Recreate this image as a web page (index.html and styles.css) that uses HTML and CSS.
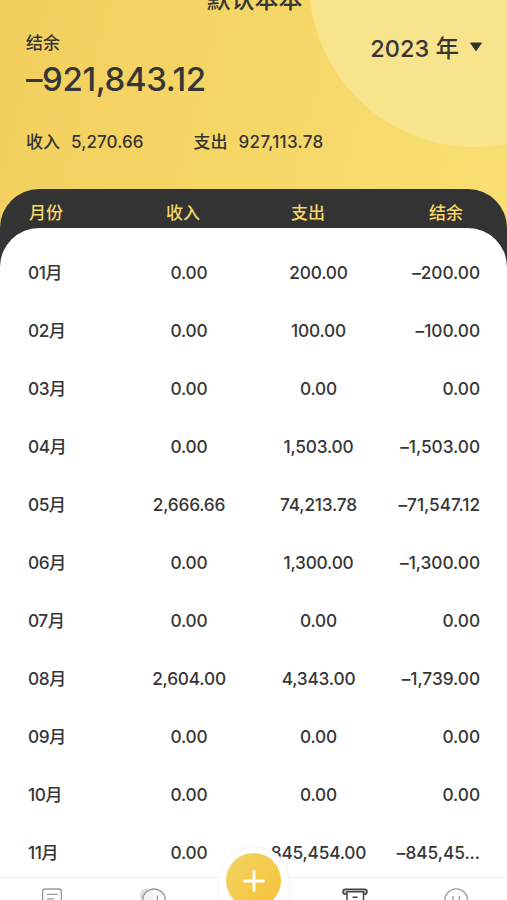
FILE: index.html
```html
<!DOCTYPE html>
<html lang="zh-CN">
<head>
    <meta charset="UTF-8">
    <meta name="viewport" content="width=device-width, initial-scale=1.0">
    <title>默认本本</title>
    <link rel="stylesheet" href="styles.css">
</head>
<body>
    <header class="summary">
        <h1 class="book-name">默认本本</h1>
        <div class="summary-top">
            <div class="balance">
                <div class="label">结余</div>
                <div class="balance-value">–921,843.12</div>
            </div>
            <div class="year">
                <span>2023 年</span>
                <svg width="14" height="10" viewBox="0 0 14 10"><path d="M1.6 1h10.8L7 8.8z" fill="#333" stroke="#333" stroke-linejoin="round"/></svg>
            </div>
        </div>
        <div class="totals">
            <div class="total"><span>收入</span><span class="num">5,270.66</span></div>
            <div class="total"><span>支出</span><span class="num">927,113.78</span></div>
        </div>
    </header>

    <main class="report">
        <div class="report-head">
            <span>月份</span>
            <span>收入</span>
            <span>支出</span>
            <span>结余</span>
        </div>
        <div class="months">
            <div class="row"><span>01月</span><span>0.00</span><span>200.00</span><span>–200.00</span></div>
            <div class="row"><span>02月</span><span>0.00</span><span>100.00</span><span>–100.00</span></div>
            <div class="row"><span>03月</span><span>0.00</span><span>0.00</span><span>0.00</span></div>
            <div class="row"><span>04月</span><span>0.00</span><span>1,503.00</span><span>–1,503.00</span></div>
            <div class="row"><span>05月</span><span>2,666.66</span><span>74,213.78</span><span>–71,547.12</span></div>
            <div class="row"><span>06月</span><span>0.00</span><span>1,300.00</span><span>–1,300.00</span></div>
            <div class="row"><span>07月</span><span>0.00</span><span>0.00</span><span>0.00</span></div>
            <div class="row"><span>08月</span><span>2,604.00</span><span>4,343.00</span><span>–1,739.00</span></div>
            <div class="row"><span>09月</span><span>0.00</span><span>0.00</span><span>0.00</span></div>
            <div class="row"><span>10月</span><span>0.00</span><span>0.00</span><span>0.00</span></div>
            <div class="row"><span>11月</span><span>0.00</span><span>845,454.00</span><span class="clipped">–845,45...</span></div>
        </div>
    </main>

    <nav class="tabbar">
        <!-- 明细 -->
        <svg class="tab" width="28" height="28" viewBox="0 0 28 28" fill="none" stroke="#999" stroke-width="1.3" stroke-linecap="round">
            <rect x="5.6" y="3" width="18.8" height="22" rx="2.5"/>
            <path d="M10.5 8.3h9.5M10.5 12.8h6"/>
        </svg>
        <!-- 统计 -->
        <svg class="tab" width="28" height="28" viewBox="0 0 28 28" fill="none" stroke="#999" stroke-width="1.3" stroke-linecap="round">
            <circle cx="9" cy="9.5" r="7" fill="#ddd" stroke="none"/>
            <circle cx="16" cy="14.3" r="11.3" fill="#fff" fill-opacity=".65"/>
            <path d="M19.4 10v5"/>
        </svg>
        <span class="tab-gap"></span>
        <!-- 报表 -->
        <svg class="tab" width="28" height="28" viewBox="0 0 28 28" fill="none" stroke="#444" stroke-width="1.5" stroke-linejoin="round">
            <rect x="2" y="3.2" width="24" height="5" rx="2.5" fill="#bbb"/>
            <path d="M6 5.8v20h16.5v-20" fill="#fff"/>
            <path d="M5.5 5.7H23M11.5 11.3h5"/>
        </svg>
        <!-- 我的 -->
        <svg class="tab" width="28" height="28" viewBox="0 0 28 28" fill="none" stroke="#999" stroke-width="1.3" stroke-linecap="round">
            <circle cx="14.2" cy="14.3" r="11.4"/>
            <path d="M11 10.3v4M17.4 10.3v4"/>
        </svg>
        <div class="add-wrap">
            <div class="add">
                <svg width="24" height="24" viewBox="0 0 24 24"><path d="M12 2.5v19M2.5 12h19" stroke="#fff" stroke-width="2.8" stroke-linecap="round"/></svg>
            </div>
        </div>
    </nav>
</body>
</html>
```

FILE: styles.css
```css
* {
    box-sizing: border-box;
}
body {
    margin: 0;
    height: 900px;
    overflow: hidden;
    display: flex;
    flex-direction: column;
    background: #fff;
    color: #363636;
    font-family: Inter, "Noto Sans CJK SC", sans-serif;
    font-size: 17.3px;
    font-weight: 500;
    letter-spacing: -0.2px;
}
.summary {
    height: 228px;
    flex: none;
    padding: 0 24px 0 26px;
    /* light disc in the top right corner */
    background:
        radial-gradient(circle at 475px -19px, #f8e48d 165.5px, transparent 166.5px),
        linear-gradient(105deg, #f3cf5d, #f5d767 50%, #f9df72);
}
.book-name {
    margin: -14px 0 0;
    height: 46px;
    line-height: 28px;
    font-size: 24px;
    font-weight: 500;
    letter-spacing: 0;
    text-align: center;
}
.summary-top {
    display: flex;
    justify-content: space-between;
    height: 97px;
}
.label {
    line-height: 22px;
    font-size: 17px;
    letter-spacing: 0;
}
.balance-value {
    margin-top: 4px;
    line-height: 42px;
    font-size: 33px;
    letter-spacing: -0.4px;
}
.year {
    display: flex;
    align-items: center;
    gap: 10px;
    height: 29px;
    font-size: 23.5px;
    letter-spacing: 0;
}
.totals {
    display: flex;
    gap: 50px;
    line-height: 27px;
    font-size: 17px;
    letter-spacing: 0;
}
.total {
    display: flex;
    gap: 11px;
}
.total .num {
    letter-spacing: 0.1px;
}
.total:last-child .num {
    letter-spacing: 0.3px;
}
.report {
    flex: 1;
    margin-top: -39px;
    border-radius: 39px 39px 0 0;
    background: #333;
}
.report-head {
    display: grid;
    grid-template-columns: 34px 34px 34px 34px;
    column-gap: 103px;
    height: 39px;
    padding: 9px 0 0 29px;
    line-height: 30px;
    font-size: 17px;
    letter-spacing: 0;
    color: #f5d767;
}
.report-head span:nth-child(3) {
    margin-left: -12px;
    white-space: nowrap;
}
.report-head span:nth-child(4) {
    margin-left: -11px;
    white-space: nowrap;
}
.months {
    padding: 16px 27px 0 28px;
    border-radius: 39px 39px 0 0;
    background: #fff;
}
.row {
    display: grid;
    grid-template-columns: 96px 130px 129px 97px;
    height: 58px;
    line-height: 58px;
    text-align: center;
    white-space: nowrap;
}
.row span:first-child {
    text-align: left;
    letter-spacing: -0.5px;
}
.row span:last-child {
    text-align: right;
    letter-spacing: -0.05px;
}
.row .clipped {
    letter-spacing: 0.1px;
}
.tabbar {
    position: absolute;
    left: 0;
    right: 0;
    bottom: 0;
    height: 23px;
    padding-top: 8px;
    display: grid;
    grid-template-columns: repeat(5, 1fr);
    justify-items: center;
    border-top: 1px solid #eee;
    background: #fff;
}
.add-wrap {
    position: absolute;
    left: 50%;
    top: -32px;
    width: 72px;
    height: 55px;
    margin-left: -36px;
    padding-top: 6px;
    overflow: hidden;
    border: 1px solid #f2f2f2;
    border-bottom: 0;
    border-radius: 36px 36px 0 0;
    background: #fff;
}
.add {
    width: 55px;
    height: 55px;
    margin: 0 auto;
    display: flex;
    align-items: center;
    justify-content: center;
    border-radius: 50%;
    background: linear-gradient(135deg, #f3d465, #f5c235);
}
```
